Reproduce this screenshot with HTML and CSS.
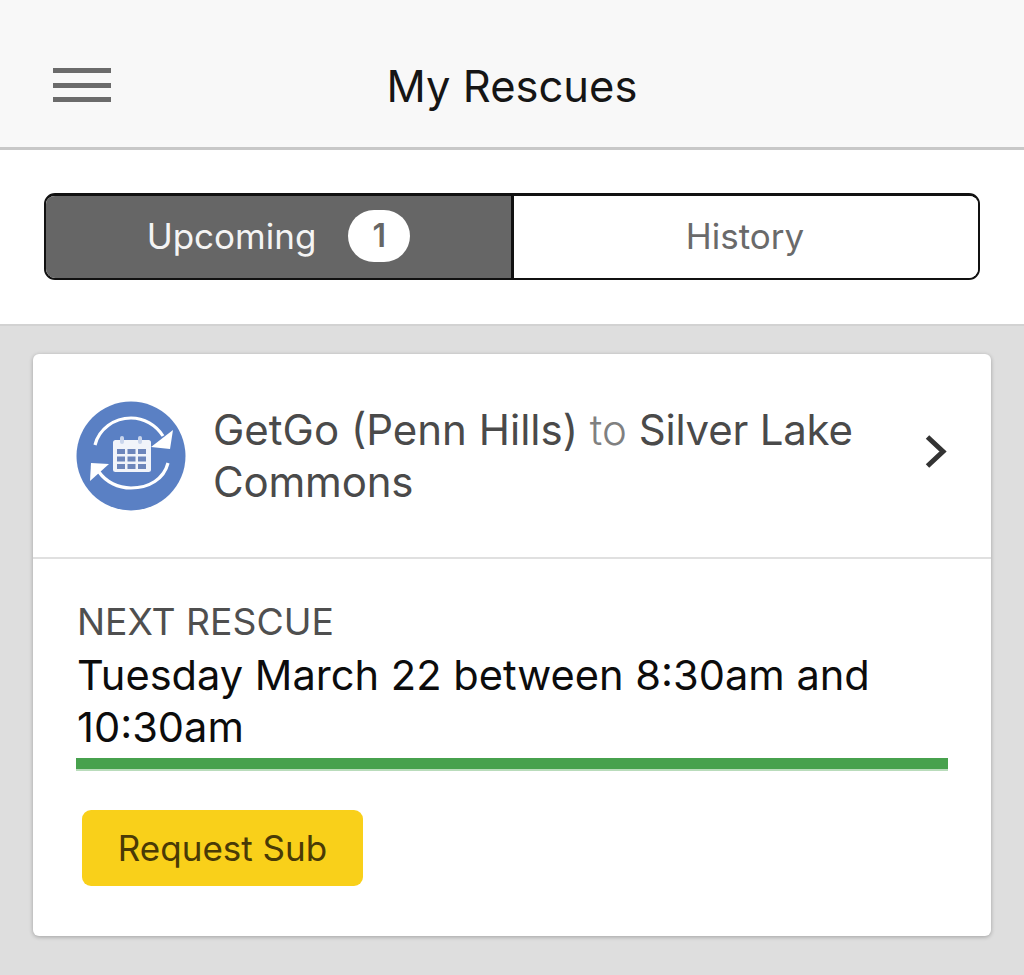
FILE: index.html
```html
<!DOCTYPE html>
<html lang="en">
<head>
<meta charset="utf-8">
<title>My Rescues</title>
<link rel="stylesheet" href="styles.css">
</head>
<body>
<header class="topbar">
  <button class="menu" aria-label="Menu"><span></span><span></span><span></span></button>
  <h1 class="title">My Rescues</h1>
</header>
<section class="tabs-wrap">
  <div class="tabs">
    <div class="tab tab-active"><span>Upcoming</span><span class="badge">1</span></div>
    <div class="tab tab-plain">History</div>
  </div>
</section>
<main class="content">
  <article class="card">
    <div class="card-head">
      <svg class="route-icon" viewBox="0 0 110 110" aria-hidden="true">
        <circle cx="55" cy="55" r="54.500" fill="#5a80c4"/>
        <g fill="none" stroke="#fff" stroke-width="3.200">
          <path d="M19 44C23 28 38 17 55 17C68 17 80 24 87 35"/>
          <path d="M92 62C88 78 73 87 55 87C42 87 30 81 23 71"/>
        </g>
        <path d="M97 29L94 48L75 46Z" fill="#fff"/>
        <path d="M14 80L15 62L33 63Z" fill="#fff"/>
        <rect x="37" y="39" width="38" height="32" rx="2.500" fill="#f1f4fa"/>
        <rect x="44" y="35" width="4" height="8" rx="2" fill="#c9d5ec"/>
        <rect x="62" y="35" width="4" height="8" rx="2" fill="#c9d5ec"/>
        <g fill="#6d86bb">
          <rect x="41" y="48" width="8" height="5"/><rect x="51.500" y="48" width="8" height="5"/><rect x="62" y="48" width="8" height="5"/>
          <rect x="41" y="55.500" width="8" height="5"/><rect x="51.500" y="55.500" width="8" height="5"/><rect x="62" y="55.500" width="8" height="5"/>
          <rect x="41" y="63" width="8" height="5"/><rect x="51.500" y="63" width="8" height="5"/><rect x="62" y="63" width="8" height="5"/>
        </g>
      </svg>
      <p class="route"><span>GetGo (Penn Hills)</span> <span class="to">to</span> <span class="dest">Silver Lake Commons</span></p>
      <svg class="chevron" viewBox="0 0 24 36" aria-hidden="true"><path d="M3.500 3L19 17.500L3.500 32" fill="none" stroke="#333" stroke-width="5"/></svg>
    </div>
    <div class="card-body">
      <div class="next-label">NEXT RESCUE</div>
      <div class="next-time">Tuesday March 22 between 8:30am and 10:30am</div>
      <div class="bar"></div>
      <button class="sub">Request Sub</button>
    </div>
  </article>
</main>
</body>
</html>
```
FILE: styles.css
```css
* { box-sizing: border-box; }
html, body { margin: 0; height: 100%; }
body {
  width: 1024px;
  height: 975px;
  overflow: hidden;
  background: #dedede;
  font-family: Inter, "Liberation Sans", sans-serif;
  display: flex;
  flex-direction: column;
}
.topbar {
  height: 150px;
  background: #f8f8f8;
  border-bottom: 3px solid #c8c8c8;
  display: flex;
  align-items: flex-start;
  justify-content: center;
  position: relative;
  padding-top: 60px;
}
.title { margin: 0; font-size: 43.500px; line-height: 52px; font-weight: 400; color: #151515; }
.menu {
  position: absolute;
  left: 53px;
  top: 68px;
  width: 58px;
  height: 34px;
  padding: 0;
  border: 0;
  background: none;
  display: flex;
  flex-direction: column;
  justify-content: space-between;
}
.menu span { display: block; height: 5px; background: #6b6b6b; }
.tabs-wrap {
  height: 176px;
  background: #fff;
  border-bottom: 2px solid #d2d2d2;
  padding: 43px 44px 0;
}
.tabs {
  display: flex;
  width: 936px;
  height: 87px;
  border: 2px solid #111;
  border-top-width: 3px;
  border-radius: 11px;
  overflow: hidden;
}
.tab {
  display: flex;
  align-items: center;
  justify-content: center;
  padding-bottom: 3px;
  font-size: 35px;
}
.tab-plain {
  flex: 1;
  padding-right: 2px;
  color: #6a6a6a;
  background: #fff;
}
.tab-active {
  flex: 0 0 468px;
  background: #666;
  color: #f4f4f4;
  border-right: 3px solid #111;
  gap: 32px;
}
.badge {
  width: 62px;
  height: 52px;
  border-radius: 26px;
  background: #fff;
  color: #666;
  font-size: 32px;
  font-weight: 600;
  display: flex;
  align-items: center;
  justify-content: center;
}
.content { flex: 1; padding: 28px 33px 0; }
.card {
  width: 958px;
  height: 582px;
  background: #fff;
  border-radius: 6px;
  box-shadow: 0 1px 4px rgba(0,0,0,.28);
}
.card-head {
  height: 205px;
  border-bottom: 2px solid #e0e0e0;
  padding: 0 43px;
  display: flex;
  align-items: center;
  gap: 27px;
}
.route-icon { width: 110px; height: 110px; flex: none; }
.route { margin: 0; width: 650px; flex: none; font-size: 42px; line-height: 52px; color: #4a4a4a; }
.to { color: #808080; font-weight: 300; }
.dest { letter-spacing: -0.2px; }
.chevron { width: 24px; height: 36px; margin: 0 0 8px 34px; flex: none; }
.card-body { padding: 41px 43px 0; }
.next-label { font-size: 37.300px; line-height: 44px; color: #4f4f4f; margin-left: 1px; }
.next-time { font-size: 41.600px; line-height: 52px; color: #0c0c0c; margin: 5px 0 0 1px; }
.bar { height: 13px; margin-top: 5px; background: #47a14d; border-bottom: 2px solid #b9dcbb; }
.sub {
  display: block;
  width: 281px;
  height: 76px;
  margin: 39px 0 0 6px;
  padding: 0;
  border: 0;
  border-radius: 9px;
  background: #f9d01a;
  color: #4a3a06;
  font: 400 35px Inter, "Liberation Sans", sans-serif;
}
```
